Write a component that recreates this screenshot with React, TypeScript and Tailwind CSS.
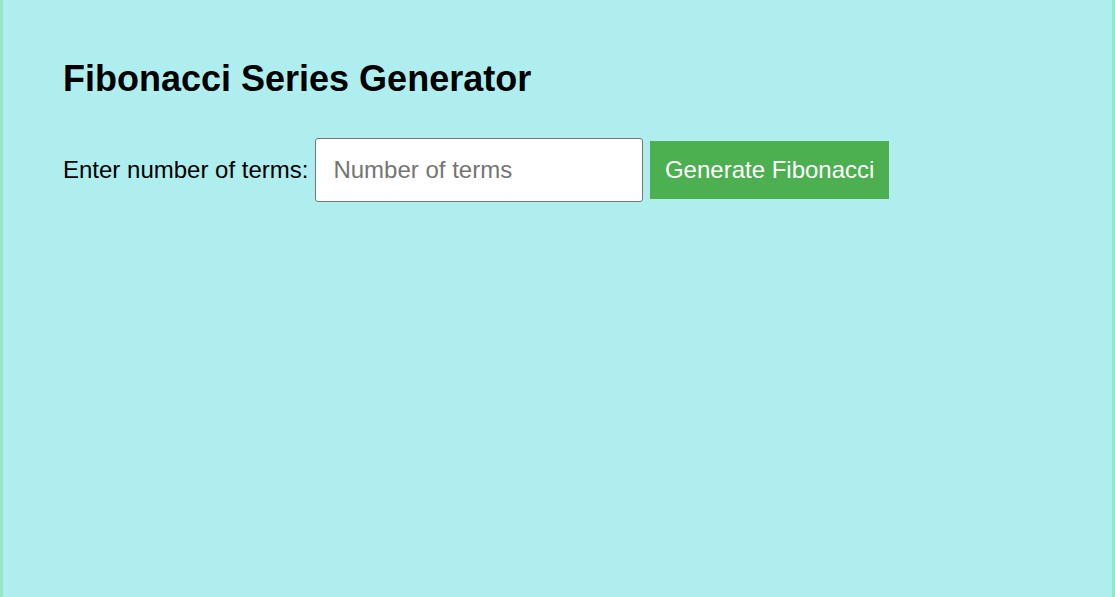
import { useState } from "react";

function fib(n: number): number[] {
  const out: number[] = [];
  let a = 0;
  let b = 1;
  for (let i = 0; i < n; i++) {
    out.push(a);
    [a, b] = [b, a + b];
  }
  return out;
}

export default function App() {
  const [terms, setTerms] = useState("");
  const [series, setSeries] = useState<number[] | null>(null);

  const handleGenerate = () => {
    const n = parseInt(terms, 10);
    if (!isNaN(n) && n > 0) setSeries(fib(Math.min(n, 80)));
  };

  return (
    <div className="h-[597px] w-full bg-[#97e6c3] px-[3px] font-['Liberation_Sans',Arial,sans-serif] text-black">
      <div className="h-full bg-[#afeeee] pl-[60px] pr-[58px] pt-[58px]">
        <h1 className="text-[36px] font-bold leading-[41px]">Fibonacci Series Generator</h1>

        <div className="mt-[39px] flex items-center gap-[7px]">
          <label htmlFor="terms" className="text-[24px] leading-[28px]">
            Enter number of terms:
          </label>
          <input
            id="terms"
            type="number"
            value={terms}
            onChange={(e) => setTerms(e.target.value)}
            placeholder="Number of terms"
            className="h-[64px] w-[328px] rounded-[3px] border border-[#767676] bg-white px-[17px] text-[24px] leading-[28px] outline-none placeholder:text-[#757575]"
          />
          <button
            onClick={handleGenerate}
            className="bg-[#4caf50] px-[14.5px] py-[15px] text-[24px] leading-[28px] text-white"
          >
            Generate Fibonacci
          </button>
        </div>

        {series && (
          <p className="mt-6 text-[20px]">{series.join(", ")}</p>
        )}
      </div>
    </div>
  );
}
